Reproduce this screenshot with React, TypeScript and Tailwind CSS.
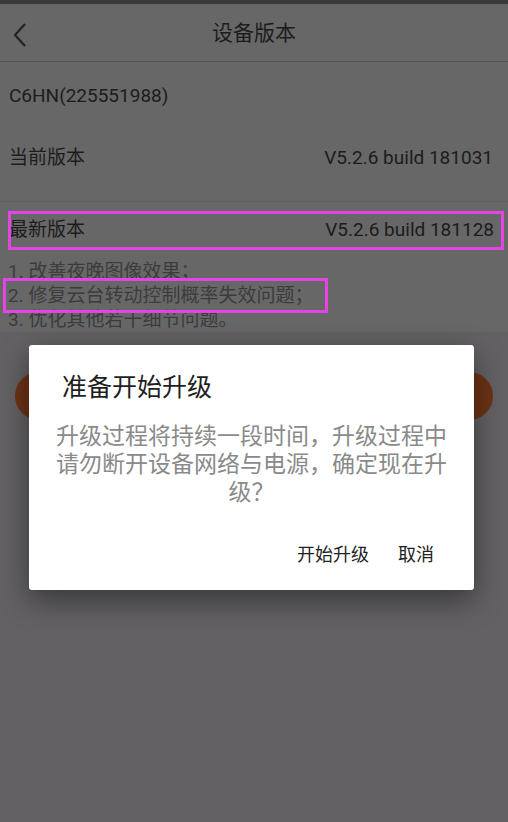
import React from "react";

const font = { fontFamily: 'Roboto, "Noto Sans CJK SC", sans-serif' };

export default function App() {
  return (
    <div className="relative w-[508px] h-[822px] overflow-hidden bg-[#636164]" style={font}>
      <div className="h-[4px] bg-[#3a3a3a]" />
      <div className="relative h-[58px] bg-[#676767] border-b border-[#555555] flex items-center justify-center">
        <svg className="absolute left-[11px] top-[17px]" width="18" height="28" viewBox="0 0 18 28">
          <path d="M14 3 L4 14 L14 25" fill="none" stroke="#222" strokeWidth="2.2" />
        </svg>
        <span className="text-[21px] text-[#1c1c1c] mt-[2px]">设备版本</span>
      </div>
      <div className="bg-[#676767]">
        <div className="h-[68px] flex items-center px-[9px] text-[19px] text-[#1c1c1c]">C6HN(225551988)</div>
        <div className="h-[56px] flex items-center justify-between pl-[9px] pr-[15px] text-[19px] text-[#1c1c1c]">
          <span>当前版本</span>
          <span>V5.2.6 build 181031</span>
        </div>
        <div className="h-[15px]" />
        <div className="h-px bg-[#5e5e5e]" />
        <div className="h-[56px] flex items-center justify-between pl-[9px] pr-[14px] text-[19px] text-[#1c1c1c]">
          <span>最新版本</span>
          <span>V5.2.6 build 181128</span>
        </div>
        <div className="pl-[8px] pt-[2px] text-[19px] leading-[24px] text-[#3c3c3c]">
          <div>1. 改善夜晚图像效果；</div>
          <div>2. 修复云台转动控制概率失效问题；</div>
          <div>3. 优化其他若干细节问题。</div>
        </div>
      </div>
      <div className="mx-[15px] mt-[40px] h-[48px] rounded-full bg-[#6c3315]" />

      <div className="absolute left-[8px] top-[211px] w-[496px] h-[39px] border-[3px] border-[#e344e3]" />
      <div className="absolute left-[3px] top-[278px] w-[325px] h-[35px] border-[3px] border-[#e344e3]" />

      <div className="absolute left-[29px] top-[345px] w-[445px] h-[245px] bg-white rounded-[3px] shadow-[0_10px_30px_rgba(0,0,0,0.45)] flex flex-col">
        <div className="pt-[28px] pl-[33px] text-[25px] leading-[30px] text-[#1e1e1e]">准备开始升级</div>
        <div className="mt-[20px] px-[24px] text-center text-[23px] leading-[28px] text-[#8a8a8a]">
          升级过程将持续一段时间，升级过程中请勿断开设备网络与电源，确定现在升级？
        </div>
        <div className="mt-[36px] flex justify-end gap-[29px] pr-[40px] text-[18px] leading-[24px] text-[#222222]">
          <span>开始升级</span>
          <span>取消</span>
        </div>
      </div>
    </div>
  );
}
